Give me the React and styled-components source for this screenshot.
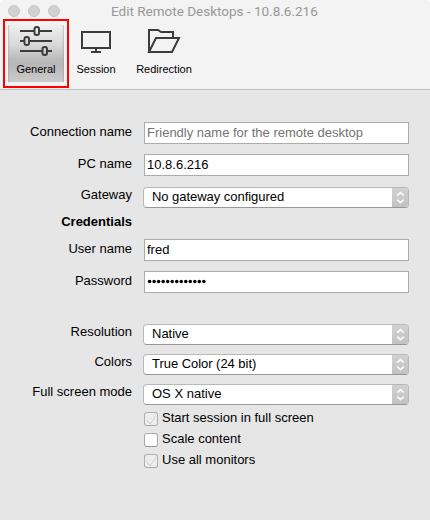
import React from "react";
import styled, { createGlobalStyle } from "styled-components";

const Global = createGlobalStyle`
  * { box-sizing: border-box; }
  body { margin: 0; background: #fff; font-family: "Liberation Sans", Arial, sans-serif; }
`;
const Window = styled.main`
  width: 430px; height: 520px; overflow: hidden;
  background: #e6e6e6; color: #000; border-radius: 5px 5px 0 0;
`;
const Header = styled.header`
  height: 90px; background: #f3f3f3; border-bottom: 1px solid #c1c1c1;
`;
const TitleBar = styled.div`
  height: 19px; padding: 5px 0 0 8px; display: flex; align-items: flex-start;
`;
const Light = styled.i`
  width: 12px; height: 12px; margin-right: 8px; border-radius: 50%;
  background: #d1d1d1; border: 1px solid #c4c4c4;
`;
const Title = styled.h1`
  margin: -2px 0 0 42px; padding-left: 1px; font: 400 13.5px/16px Roboto, sans-serif;
  color: #989898; white-space: nowrap;
`;
const Toolbar = styled.nav`
  display: flex; height: 69px; padding-left: 3px;
`;
const Tool = styled.button`
  width: ${(p) => p.$width}px; height: 69px; padding: 5px 3px 3px; border: 2px solid ${(p) => (p.$active ? "#f00" : "transparent")};
  background: ${(p) => (p.$active
    ? "linear-gradient(90deg, #9998 0, transparent 2px, transparent 54px, #9998 56px) 3px 4px / 56px 57px no-repeat, linear-gradient(#f0f0f0, #d8d8d8 35%, #bcbcbc 60%, #b8b8b8 70%, #cbcbcb) 3px 4px / 56px 57px no-repeat"
    : "transparent")};
  margin-left: ${(p) => p.$gap || 0}px; font: inherit; color: #000;
  display: flex; flex-direction: column; align-items: center;
`;
const ToolIcon = styled.svg`
  width: 34px; height: 30px; fill: none; stroke: #3c3c3c; stroke-width: 2; flex: none;
`;
const ToolLabel = styled.span`
  margin-top: 7px; font-size: 11px; line-height: 13px; white-space: nowrap;
`;
const Form = styled.form`
  padding: 32px 21px 0 0; display: flex; flex-direction: column;
`;
const Row = styled.div`
  display: grid; grid-template-columns: 132px 266px; column-gap: 11px;
  height: ${(p) => p.$height}px; align-items: start;
`;
const Label = styled.label`
  padding-top: ${(p) => p.$top || 0}px; text-align: right; font-size: 13px; line-height: 16px;
  font-weight: ${(p) => (p.$bold ? 700 : 400)}; white-space: nowrap;
`;
const Value = styled.span`
  display: block; font-size: 13px; line-height: 16px; letter-spacing: ${(p) => p.$spacing || 0}px; white-space: nowrap;
`;
const Field = styled.div`
  margin-left: 1px; width: 265px; height: 22px; padding: 2px 2px 0; background: #fff;
  border: 1px solid #acacac; color: ${(p) => (p.$placeholder ? "#737373" : "#000")};
`;
const Dots = styled.svg`
  display: block; width: 60px; height: 16px; fill: #000;
`;
const Select = styled.div`
  height: 21px; display: flex; border: 1px solid #b8b8b8; border-bottom-color: #989898;
  border-radius: 4px; background: #fff; overflow: hidden;
`;
const SelectText = styled.div`
  flex: 1; padding: 1px 0 0 8px;
`;
const Stepper = styled.div`
  width: 17px; margin: -1px -1px -1px 0; background: linear-gradient(#d2d2d2, #c1c1c1);
`;
const StepperIcon = styled.svg`
  display: block; width: 17px; height: 21px; fill: none; stroke: #fafafa; stroke-width: 1.7;
`;
const Checks = styled.div`
  padding: 0 0 0 144px; display: flex; flex-direction: column; gap: 7px;
`;
const CheckRow = styled.label`
  display: flex; height: 14px; align-items: flex-start; gap: 4px;
`;
const Check = styled.span`
  width: 14px; height: 14px; flex: none; border: 1px solid ${(p) => (p.$off ? "#a9a9a9" : "#b0b0b0")};
  border-bottom-color: ${(p) => (p.$off ? "#949494" : "#a8a8a8")};
  border-radius: 3px; background: ${(p) => (p.$off ? "#fff" : "#ededed")};
`;
const CheckMark = styled.svg`
  display: block; width: 12px; height: 12px; fill: none; stroke-linecap: round;
`;
const CheckText = styled(Value)`
  margin-top: -2px;
`;

const textFields = {
  name: { label: "Connection name", value: "Friendly name for the remote desktop", placeholder: true, height: 32 },
  pc: { label: "PC name", value: "10.8.6.216", height: 33 },
  user: { label: "User name", value: "fred", height: 32 },
};

function TextRow({ label, value, placeholder, height }) {
  return (
    <Row $height={height}>
      <Label $top={2}>{label}</Label>
      <Field $placeholder={placeholder}><Value>{value}</Value></Field>
    </Row>
  );
}
function SelectRow({ label, value, height, spacing }) {
  return (
    <Row $height={height}>
      <Label>{label}</Label>
      <Select>
        <SelectText><Value $spacing={spacing}>{value}</Value></SelectText>
        <Stepper><StepperIcon viewBox="0 0 17 21"><path d="M5.2 8.7 8.5 5.6l3.3 3.1M5.2 12.6l3.3 3.1 3.3-3.1" /></StepperIcon></Stepper>
      </Select>
    </Row>
  );
}
function CheckOption({ text, off }) {
  return (
    <CheckRow>
      <Check $off={off}>{!off && <CheckMark viewBox="0 0 12 12">
        <path d="M3 6.5 5.2 9.5 10 2.5" stroke="#c8c8c8" strokeWidth="2.2" />
        <path d="M3 6 5.2 9 10 2" stroke="#fafafa" strokeWidth="1.3" />
      </CheckMark>}</Check>
      <CheckText>{text}</CheckText>
    </CheckRow>
  );
}

export default function App() {
  return (
    <Window>
      <Global />
      <Header>
        <TitleBar><Light /><Light /><Light /><Title>Edit Remote Desktops - 10.8.6.216</Title></TitleBar>
        <Toolbar>
          <Tool $active $width={66}>
            <ToolIcon viewBox="0 0 34 30">
              <path d="M1 5h14.5M20.5 5H33M1 15h4.5M10.5 15H33M1 25h22.5M28.5 25H33" />
              <rect x="15.5" y="1" width="4.5" height="8" rx="2" />
              <rect x="5.5" y="11" width="4.5" height="8" rx="2" />
              <rect x="23.5" y="21" width="4.5" height="8" rx="2" />
            </ToolIcon>
            <ToolLabel>General</ToolLabel>
          </Tool>
          <Tool $width={50} $gap={2}>
            <ToolIcon viewBox="0 0 34 30">
              <path d="M3 6h28v16H3zM17 22v4M12 26h10" />
            </ToolIcon>
            <ToolLabel>Session</ToolLabel>
          </Tool>
          <Tool $width={66} $gap={10}>
            <ToolIcon viewBox="0 0 34 30">
              <path d="M2 26V4h9l3 2h12v6M2 26 9 12h23l-7 14z" />
            </ToolIcon>
            <ToolLabel>Redirection</ToolLabel>
          </Tool>
        </Toolbar>
      </Header>
      <Form>
        <TextRow {...textFields.name} />
        <TextRow {...textFields.pc} />
        <SelectRow label="Gateway" value="No gateway configured" height={27} spacing={-0.04} />
        <Row $height={25}><Label $bold>Credentials</Label></Row>
        <TextRow {...textFields.user} />
        <Row $height={53}>
          <Label $top={2}>Password</Label>
          <Field>
            <Dots viewBox="0 0 60 16">
              {Array.from({ length: 13 }, (_, i) => <circle key={i} cx={2.6 + i * 4.52} cy="7.5" r="1.75" />)}
            </Dots>
          </Field>
        </Row>
        <SelectRow label="Resolution" value="Native" height={30} />
        <SelectRow label="Colors" value="True Color (24 bit)" height={30} spacing={-0.04} />
        <SelectRow label="Full screen mode" value="OS X native" height={28} />
        <Checks>
          <CheckOption text="Start session in full screen" />
          <CheckOption text="Scale content" off />
          <CheckOption text="Use all monitors" />
        </Checks>
      </Form>
    </Window>
  );
}
